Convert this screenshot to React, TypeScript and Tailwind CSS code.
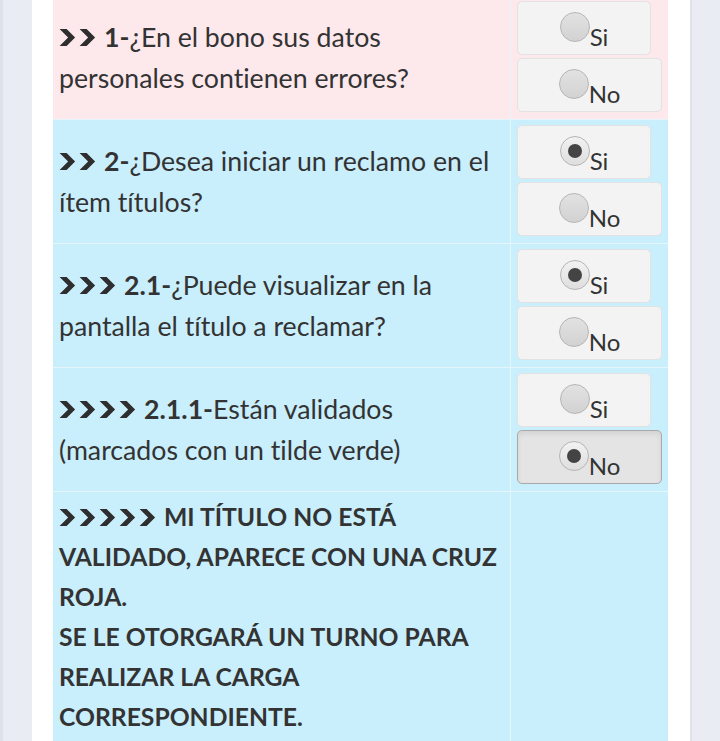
import React from "react";

const font = { fontFamily: "Lato, 'Open Sans', sans-serif" };

function Chevron() {
  return (
    <svg width="17" height="19" viewBox="0 0 17 19" className="shrink-0">
      <polygon points="0.6,1 7.6,1 16.1,9.5 7.6,18 0.6,18 9.1,9.5" fill="#2e2e2e" />
    </svg>
  );
}

function Chevrons({ n }: { n: number }) {
  return (
    <span className="inline-flex items-center gap-[3px] mr-[8px] align-middle relative -top-[2px]">
      {Array.from({ length: n }).map((_, i) => (
        <Chevron key={i} />
      ))}
    </span>
  );
}

function Radio({ checked }: { checked: boolean }) {
  return (
    <span
      className={
        "w-[30px] h-[30px] rounded-full border border-[#b5b5b5] flex items-center justify-center shrink-0 " +
        (checked
          ? "bg-gradient-to-b from-[#f2f2f2] to-[#dedede]"
          : "bg-gradient-to-b from-[#e2e2e2] to-[#d2d2d2]")
      }
    >
      {checked && <span className="w-[14px] h-[14px] rounded-full bg-[#444]" />}
    </span>
  );
}

function Opt({ label, checked, wide, active }: { label: string; checked: boolean; wide?: boolean; active?: boolean }) {
  return (
    <div
      className={
        "h-[54px] rounded-[5px] border flex justify-center items-start pt-[10px] " +
        (wide ? "w-[145px] " : "w-[134px] ") +
        (active
          ? "bg-[#e4e4e4] border-[#a9a9a9] shadow-[inset_0_3px_5px_rgba(0,0,0,0.08)]"
          : "bg-[#f3f3f3] border-[#e2e2e2]")
      }
    >
      <Radio checked={checked} />
      <span className="text-[24px] leading-none text-[#333] mt-[13px]">{label}</span>
    </div>
  );
}

function Row({
  bg,
  n,
  num,
  l1,
  l2,
  si,
  no,
}: {
  bg: string;
  n: number;
  num: string;
  l1: string;
  l2: string;
  si: boolean;
  no: boolean;
}) {
  return (
    <div className={"grid grid-cols-[458px_157px] h-[124px] border-b border-[#e4f5fc] " + bg}>
      <div className="flex flex-col justify-center px-[6px] border-r border-[#e4f5fc] text-[26.7px] leading-[41px] text-[#333]">
        <div className="whitespace-nowrap">
          <Chevrons n={n} />
          <b className="font-bold">{num}</b>
          {l1}
        </div>
        <div className="whitespace-nowrap">{l2}</div>
      </div>
      <div className="flex flex-col gap-[3px] pl-[6px] pt-[5px]">
        <Opt label="Si" checked={si} />
        <Opt label="No" checked={no} wide active={no && n === 4} />
      </div>
    </div>
  );
}

export default function App() {
  return (
    <div
      className="w-[720px] h-[741px] overflow-hidden flex bg-[#e9ecf3] [font-variant-ligatures:none]"
      style={font}
    >
      <div className="w-[32px] shrink-0 border-l-[3px] border-[#dde1e9]" />
      <div className="w-[658px] shrink-0 bg-white pl-[21px] pr-[22px]">
        <div className="-mt-[4px]">
          <Row bg="bg-[#fde8ec]" n={2} num="1-" l1="¿En el bono sus datos" l2="personales contienen errores?" si={false} no={false} />
          <Row bg="bg-[#c9eefc]" n={2} num="2-" l1="¿Desea iniciar un reclamo en el" l2="ítem títulos?" si={true} no={false} />
          <Row bg="bg-[#c9eefc]" n={3} num="2.1-" l1="¿Puede visualizar en la" l2="pantalla el título a reclamar?" si={true} no={false} />
          <Row bg="bg-[#c9eefc]" n={4} num="2.1.1-" l1="Están validados" l2="(marcados con un tilde verde)" si={false} no={true} />
          <div className="grid grid-cols-[458px_157px] bg-[#c9eefc] h-[300px]">
            <div className="px-[6px] pt-[5px] border-r border-[#e4f5fc] text-[24.7px] leading-[40px] font-bold text-[#333] uppercase">
              <div className="whitespace-nowrap">
                <Chevrons n={5} />
                MI TÍTULO NO ESTÁ
              </div>
              <div className="whitespace-nowrap">VALIDADO, APARECE CON UNA CRUZ</div>
              <div className="whitespace-nowrap">ROJA.</div>
              <div className="whitespace-nowrap">SE LE OTORGARÁ UN TURNO PARA</div>
              <div className="whitespace-nowrap">REALIZAR LA CARGA</div>
              <div className="whitespace-nowrap">CORRESPONDIENTE.</div>
            </div>
            <div />
          </div>
        </div>
      </div>
      <div className="flex-1 border-l-[2px] border-[#dfe2e9]" />
    </div>
  );
}
